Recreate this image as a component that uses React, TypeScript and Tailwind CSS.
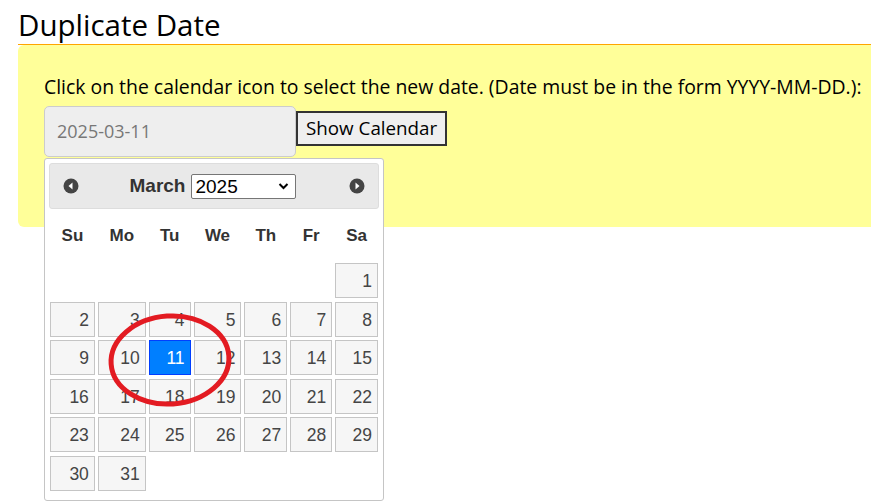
import React from 'react'

const widths = ['w-[45px]', 'w-[48px]', 'w-[42px]', 'w-[48px]', 'w-[43px]', 'w-[42px]', 'w-[43px]']
const dayNames = ['Su', 'Mo', 'Tu', 'We', 'Th', 'Fr', 'Sa']

// March 2025 starts on a Saturday
const weeks: (number | null)[][] = [
  [null, null, null, null, null, null, 1],
  [2, 3, 4, 5, 6, 7, 8],
  [9, 10, 11, 12, 13, 14, 15],
  [16, 17, 18, 19, 20, 21, 22],
  [23, 24, 25, 26, 27, 28, 29],
  [30, 31, null, null, null, null, null],
]

function NavIcon({ dir }: { dir: 'prev' | 'next' }) {
  return (
    <svg width="16" height="16" viewBox="0 0 16 16">
      <circle cx="8" cy="8" r="7.5" fill="#444" />
      {dir === 'prev' ? (
        <polygon points="9.5,4.5 9.5,11.5 5.5,8" fill="#fff" />
      ) : (
        <polygon points="6.5,4.5 6.5,11.5 10.5,8" fill="#fff" />
      )}
    </svg>
  )
}

function DayCell({ day }: { day: number | null }) {
  if (day === null) return <div className="h-[35px]" />
  const active = day === 11
  return (
    <div
      className={
        active
          ? 'h-[35px] border border-[#003eff] bg-[#007fff] text-white text-right pr-[5px] pt-[7px] text-[17.5px] leading-[20px]'
          : 'h-[35px] border border-[#c5c5c5] bg-[#f6f6f6] text-[#454545] text-right pr-[5px] pt-[7px] text-[17.5px] leading-[20px]'
      }
    >
      {day}
    </div>
  )
}

function Calendar() {
  return (
    <div
      className="absolute left-[26px] top-[113px] w-[340px] h-[343px] bg-white border border-[#c5c5c5] rounded-[3px] p-[4px]"
      style={{ fontFamily: '"Liberation Sans", Arial, sans-serif' }}
    >
      <div className="h-[46px] bg-[#e9e9e9] border border-[#dddddd] rounded-[3px] flex items-center justify-between px-[13px]">
        <NavIcon dir="prev" />
        <div className="flex items-center gap-[6px] -ml-[2px]">
          <span className="text-[19px] font-bold text-[#333]">March</span>
          <div className="w-[105px] h-[25px] border border-[#767676] rounded-[2px] bg-white flex items-center justify-between pl-[3px] pr-[6px]">
            <span className="text-[19px] leading-none text-black">2025</span>
            <svg width="11" height="8" viewBox="0 0 11 8">
              <polyline points="1.5,2 5.5,6 9.5,2" fill="none" stroke="#000" strokeWidth="2" />
            </svg>
          </div>
        </div>
        <NavIcon dir="next" />
      </div>
      <div className="flex gap-[3px] px-[1px] mt-[15px] mb-[15px]">
        {dayNames.map((d, i) => (
          <div key={d} className={`${widths[i]} text-center text-[17px] font-bold text-[#333] leading-[24px]`}>
            {d}
          </div>
        ))}
      </div>
      <div className="flex flex-col gap-[3.6px] px-[1px]">
        {weeks.map((week, wi) => (
          <div key={wi} className="flex gap-[3px]">
            {week.map((day, di) => (
              <div key={di} className={widths[di]}>
                <DayCell day={day} />
              </div>
            ))}
          </div>
        ))}
      </div>
      <svg
        className="absolute left-[60px] top-[151px] pointer-events-none"
        width="130"
        height="100"
        viewBox="0 0 130 100"
      >
        <ellipse cx="65" cy="50" rx="59" ry="44" fill="none" stroke="#e31b22" strokeWidth="5" transform="rotate(-4 65 50)" />
      </svg>
    </div>
  )
}

export default function App() {
  return (
    <div className="w-[871px] h-[502px] overflow-hidden bg-white" style={{ fontFamily: '"Open Sans", "Noto Sans", sans-serif' }}>
      <div className="pl-[18px]">
        <h1 className="text-[29.5px] leading-[36px] text-black pt-[7px] pb-[1px] border-b border-[#ffa500]">Duplicate Date</h1>
        <div className="relative w-[870px] h-[182px] bg-[#ffff99] rounded-[6px] pl-[26px] pt-[29px]">
          <p className="text-[19.4px] leading-[26px] text-black">
            Click on the calendar icon to select the new date. (Date must be in the form YYYY-MM-DD.):
          </p>
          <div className="flex items-start mt-[6px]">
            <div className="w-[252px] h-[51px] bg-[#eeeeee] border border-[#cccccc] rounded-[5px] flex items-center pl-[12px] text-[18px] text-[#777]">
              2025-03-11
            </div>
            <button className="mt-[5px] h-[35px] px-[8px] border-2 border-[#333] bg-[#efefef] text-[18.8px] text-black leading-none">
              Show Calendar
            </button>
          </div>
          <Calendar />
        </div>
      </div>
    </div>
  )
}
